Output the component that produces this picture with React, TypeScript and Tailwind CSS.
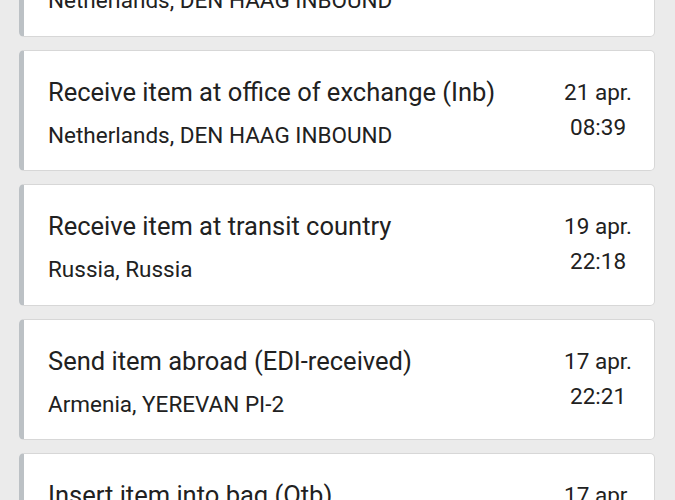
const events = [
  { title: "Receive item at office of exchange (Inb)", place: "Netherlands, DEN HAAG INBOUND", date: "21 apr.", time: "08:40" },
  { title: "Receive item at office of exchange (Inb)", place: "Netherlands, DEN HAAG INBOUND", date: "21 apr.", time: "08:39" },
  { title: "Receive item at transit country", place: "Russia, Russia", date: "19 apr.", time: "22:18" },
  { title: "Send item abroad (EDI-received)", place: "Armenia, YEREVAN PI-2", date: "17 apr.", time: "22:21" },
  { title: "Insert item into bag (Otb)", place: "Armenia, YEREVAN PI-2", date: "17 apr.", time: "21:56" },
];

function EventCard({ title, place, date, time }: (typeof events)[number]) {
  return (
    <div className="flex h-[121.5px] shrink-0 items-start justify-between rounded-[5px] border border-l-[5px] border-[#d7d7d7] border-l-[#bcc1c5] bg-white pl-[24px] pr-[22px] pt-[27px]">
      <div className="flex flex-col">
        <p className="text-[25.5px] leading-[28px]">{title}</p>
        <p className="mt-[15px] text-[22.5px] leading-[28px]">{place}</p>
      </div>
      <div className="-mt-[3px] flex flex-col items-center text-[22.5px] leading-[35px]">
        <span>{date}</span>
        <span>{time}</span>
      </div>
    </div>
  );
}

export default function App() {
  return (
    <div className="h-[500px] w-[675px] overflow-hidden bg-[#ebebeb] font-['Roboto',sans-serif] text-[#212121]">
      <div className="-mt-[85px] flex flex-col gap-[13px] pl-[19px] pr-[20px]">
        {events.map((e, i) => (
          <EventCard key={i} {...e} />
        ))}
      </div>
    </div>
  );
}
